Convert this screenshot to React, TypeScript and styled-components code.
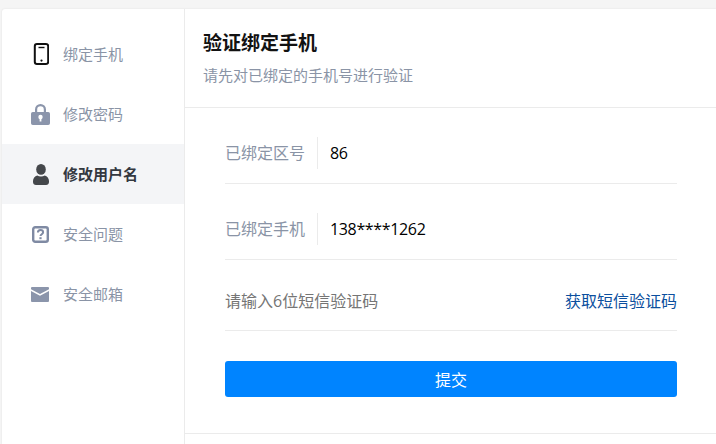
import React from "react";
import styled, { createGlobalStyle } from "styled-components";

const Global = createGlobalStyle`
  html, body { margin: 0; padding: 0; height: 100%; background: #f5f5f5; overflow: hidden; }
  body { font-family: "Open Sans", "Noto Sans CJK SC", sans-serif; }
  #root { height: 100%; }
`;

const Page = styled.div`
  height: 444px;
  padding: 9px 0 0 2px;
  box-sizing: border-box;
`;

const Shell = styled.div`
  display: flex;
  height: 100%;
  background: #fff;
  border-radius: 3px 0 0 0;
  box-shadow: 0 0 2px rgba(0, 0, 0, 0.1);
`;

const Sidebar = styled.nav`
  width: 182px;
  flex: none;
  padding-top: 15px;
`;

const NavItem = styled.div<{ $active?: boolean }>`
  display: flex;
  align-items: center;
  height: 60px;
  padding-left: 29px;
  gap: 13px;
  font-size: 15px;
  font-weight: ${(p) => (p.$active ? 700 : 400)};
  color: ${(p) => (p.$active ? "#33383f" : "#8a94a6")};
  background: ${(p) => (p.$active ? "#f4f5f7" : "transparent")};
`;

const NavLabel = styled.span`
  margin-top: -2px;
`;

const IconBox = styled.span`
  display: flex;
  width: 19px;
  height: 22px;
  align-items: center;
  justify-content: center;
  flex: none;
`;

const Main = styled.main`
  flex: 1;
  border-left: 1px solid #ebebeb;
  display: flex;
  flex-direction: column;
`;

const Header = styled.header`
  height: 98px;
  padding-left: 18px;
  border-bottom: 1px solid #ebebeb;
  display: flex;
  flex-direction: column;
`;

const Title = styled.h1`
  margin: 20px 0 0;
  font-size: 19px;
  line-height: 28px;
  font-weight: 700;
  color: #121212;
`;

const Subtitle = styled.p`
  margin: 7px 0 0;
  font-size: 15px;
  line-height: 22px;
  color: #8a94a6;
`;

const Form = styled.div`
  height: 325px;
  padding: 0 39px 0 40px;
  border-bottom: 1px solid #ebebeb;
  display: flex;
  flex-direction: column;
`;

const BoundRow = styled.div<{ $top: number }>`
  display: flex;
  align-items: center;
  height: 32px;
  margin-top: ${(p) => p.$top}px;
  padding-bottom: 14px;
  border-bottom: 1px solid #ebebeb;
`;

const Label = styled.span`
  width: 93px;
  height: 32px;
  flex: none;
  box-sizing: border-box;
  border-right: 1px solid #ebebeb;
  font-size: 16px;
  line-height: 32px;
  color: #8a94a6;
  white-space: nowrap;
`;

const Value = styled.span`
  padding-left: 12px;
  font-size: 16px;
  line-height: 32px;
  height: 32px;
  letter-spacing: -0.35px;
  color: #000;
`;

const CodeRow = styled.div`
  display: flex;
  align-items: center;
  justify-content: space-between;
  height: 71px;
  padding-top: 9px;
  box-sizing: border-box;
  border-bottom: 1px solid #ebebeb;
  font-size: 16px;
`;

const Placeholder = styled.span`
  color: #757575;
`;

const SmsLink = styled.a`
  color: #0b4f9e;
`;

const Submit = styled.button`
  display: block;
  width: 100%;
  height: 36px;
  margin-top: 30px;
  border: 0;
  border-radius: 3px;
  background: #0084ff;
  color: #fff;
  font-family: inherit;
  font-size: 16px;
  padding: 0;
`;

const PhoneIcon = () => (
  <svg width="16" height="22" viewBox="0 0 16 22" fill="none">
    <rect x="1.8" y="1" width="13.4" height="20" rx="2.2" stroke="#111" strokeWidth="2" />
    <rect x="5.5" y="3.8" width="6" height="1.4" fill="#111" />
    <circle cx="8.5" cy="17.6" r="1.1" fill="#111" />
  </svg>
);

const LockIcon = () => (
  <svg width="19" height="22" viewBox="0 0 19 22">
    <path
      fill="#8b95ab"
      fillRule="evenodd"
      d="M4 9V6.500a5.500 5.500 0 0 1 11 0V9h2.200A1.800 1.800 0 0 1 19 10.800v9.400a1.800 1.800 0 0 1-1.800 1.800H1.800A1.800 1.800 0 0 1 0 20.200v-9.400A1.800 1.800 0 0 1 1.800 9H4Zm2.200 0h6.600V6.500a3.300 3.300 0 0 0-6.600 0V9Z"
    />
    <circle cx="9.500" cy="14" r="2.200" fill="#fff" />
    <rect x="8.600" y="14.500" width="1.800" height="4" fill="#fff" />
  </svg>
);

const UserIcon = () => (
  <svg width="16" height="21" viewBox="0 0 16 21">
    <ellipse cx="8" cy="5.400" rx="4.800" ry="5.400" fill="#44474b" />
    <path fill="#44474b" d="M0 17c0-2.800 1.800-4.800 4.200-5.600 2.200 1.500 5.400 1.500 7.600 0C14.200 12.200 16 14.200 16 17v1c0 1.700-1.300 3-3 3H3c-1.700 0-3-1.300-3-3v-1Z" />
  </svg>
);

const QuestionIcon = () => (
  <svg width="17" height="17" viewBox="0 0 17 17" fill="none">
    <rect x="1.200" y="1.200" width="14.600" height="14.600" rx="2" stroke="#7f8aa3" strokeWidth="2.400" />
    <path d="M5.900 6.600c0-1.600 1.100-2.500 2.600-2.500s2.600.9 2.600 2.200c0 1.900-2.600 1.900-2.600 3.700" stroke="#7f8aa3" strokeWidth="2" />
    <rect x="7.400" y="11.200" width="2.200" height="2" fill="#7f8aa3" />
  </svg>
);

const MailIcon = () => (
  <svg width="19" height="15" viewBox="0 0 19 15">
    <path fill="#8b95ab" d="M1 0h16a1 1 0 0 1 1 1v1.200L9 7 0 2.200V1a1 1 0 0 1 1-1Z" />
    <path fill="#8b95ab" d="M0 4l9 4.800L18 4v10a1 1 0 0 1-1 1H1a1 1 0 0 1-1-1V4Z" />
  </svg>
);

const menu = [
  { label: "绑定手机", icon: <PhoneIcon /> },
  { label: "修改密码", icon: <LockIcon /> },
  { label: "修改用户名", icon: <UserIcon />, active: true },
  { label: "安全问题", icon: <QuestionIcon /> },
  { label: "安全邮箱", icon: <MailIcon /> },
];

export default function App() {
  return (
    <>
      <Global />
      <Page>
        <Shell>
          <Sidebar>
            {menu.map((m) => (
              <NavItem key={m.label} $active={m.active}>
                <IconBox>{m.icon}</IconBox>
                <NavLabel>{m.label}</NavLabel>
              </NavItem>
            ))}
          </Sidebar>
          <Main>
            <Header>
              <Title>验证绑定手机</Title>
              <Subtitle>请先对已绑定的手机号进行验证</Subtitle>
            </Header>
            <Form>
              <BoundRow $top={29}>
                <Label>已绑定区号</Label>
                <Value>86</Value>
              </BoundRow>
              <BoundRow $top={29}>
                <Label>已绑定手机</Label>
                <Value>138****1262</Value>
              </BoundRow>
              <CodeRow>
                <Placeholder>请输入6位短信验证码</Placeholder>
                <SmsLink>获取短信验证码</SmsLink>
              </CodeRow>
              <Submit>提交</Submit>
            </Form>
          </Main>
        </Shell>
      </Page>
    </>
  );
}
